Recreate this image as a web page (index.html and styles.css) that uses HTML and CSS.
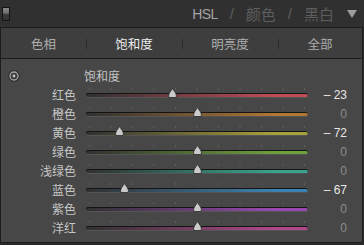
FILE: index.html
```html
<!DOCTYPE html>
<html lang="zh">
<head>
    <meta charset="UTF-8">
    <meta name="viewport" content="width=device-width, initial-scale=1.0">
    <title>HSL</title>
    <link rel="stylesheet" href="styles.css">
</head>
<body>
    <div class="header">
        <div class="switch"><span></span></div>
        <div class="title">
            <span class="title-item active">HSL</span>
            <span class="slash">/</span>
            <span class="title-item">颜色</span>
            <span class="slash">/</span>
            <span class="title-item">黑白</span>
            <svg class="arrow" width="10" height="8" viewBox="0 0 10 8"><polygon points="0,0 10,0 5,8" fill="#9c9c9c"/></svg>
        </div>
    </div>
    <div class="tabs">
        <div class="tab">色相</div>
        <div class="tab active">饱和度</div>
        <div class="tab">明亮度</div>
        <div class="tab">全部</div>
    </div>
    <div class="panel">
        <div class="panel-head">
            <div class="head-icon">
                <svg width="12" height="12" viewBox="0 0 12 12">
                    <circle cx="6" cy="6" r="5.2" fill="#3a3a3a" stroke="#2a2a2a" stroke-width="1"/>
                    <circle cx="6" cy="6" r="4" fill="none" stroke="#a4a4a4" stroke-width="1.3"/>
                    <circle cx="6" cy="6" r="1.4" fill="#c4c4c4"/>
                </svg>
            </div>
            <div class="head-title">饱和度</div>
        </div>
        <div id="slider-list"></div>
    </div>
    <script>
const sliders = [
  { name: '红色', value: -23, color: '#c04c56' },
  { name: '橙色', value: 0, color: '#b07634' },
  { name: '黄色', value: -72, color: '#a8a03c' },
  { name: '绿色', value: 0, color: '#6ea03c' },
  { name: '浅绿色', value: 0, color: '#38a48e' },
  { name: '蓝色', value: -67, color: '#3c82b0' },
  { name: '紫色', value: 0, color: '#9848b0' },
  { name: '洋红', value: 0, color: '#b0488a' }
];

const list = document.getElementById('slider-list');
sliders.forEach(s => {
  const row = document.createElement('div');
  row.className = 'slider-row';
  const left = 3.5 + (s.value + 100) / 200 * 215 - 4.5;
  const text = s.value === 0 ? '0' : '– ' + Math.abs(s.value);
  row.innerHTML = `
    <div class="slider-label">${s.name}</div>
    <div class="track" style="background: linear-gradient(to right, #303030, ${s.color} 85%);">
      <svg class="thumb" style="left: ${left}px" width="9" height="10" viewBox="0 0 9 10">
        <path d="M4.5 0.5 L7.6 5 Q8.8 7 8.2 9.5 L0.8 9.5 Q0.2 7 1.4 5 Z" fill="#cacaca" stroke="#2a2a2a" stroke-width="0.8"/>
      </svg>
    </div>
    <div class="slider-value ${s.value === 0 ? 'zero' : ''}">${text}</div>
  `;
  list.appendChild(row);
});
    </script>
</body>
</html>
```

FILE: styles.css
```css
body {
  margin: 0;
  background-color: #2b2b2b;
  font-family: "Liberation Sans", "Noto Sans CJK SC", sans-serif;
  width: 364px;
  height: 245px;
  overflow: hidden;
}

.header {
  height: 27px;
  display: flex;
  align-items: center;
  background-color: #303030;
}

.switch {
  width: 6px;
  height: 12px;
  margin-left: 2px;
  margin-top: 1px;
  border: 1px solid #151515;
  background: linear-gradient(#8a8a8a 0, #6a6a6a 45%, #3a3a3a 50%, #333 100%);
}

.title {
  margin-left: auto;
  margin-right: 7px;
  display: flex;
  align-items: center;
  gap: 11px;
  font-size: 15px;
  color: #5e5e5e;
}

.title-item.active {
  color: #a4a4a4;
  font-size: 14px;
  letter-spacing: -0.6px;
}

.slash {
  margin: 0 1px;
}

.arrow {
  margin-left: 2px;
}

.tabs {
  width: 361px;
  height: 30px;
  display: grid;
  grid-template-columns: 85px 96px 96px 1fr;
  border: 1px solid #1d1d1d;
  background-color: #3e3e3e;
}

.tab {
  position: relative;
  display: flex;
  align-items: center;
  justify-content: center;
  font-size: 12.5px;
  color: #adadad;
}

.tab.active {
  color: #ececec;
}

.tab + .tab::before {
  content: "";
  position: absolute;
  left: 0;
  top: 11px;
  height: 10px;
  width: 1px;
  background-color: #2a2a2a;
}

.panel {
  width: 361px;
  height: 176px;
  padding-top: 7px;
  border: 1px solid #1d1d1d;
  border-top: none;
  background-color: #474747;
}

.panel-head {
  display: flex;
  align-items: center;
  height: 19px;
}

.head-icon {
  width: 83px;
  padding-left: 7px;
  box-sizing: border-box;
  display: flex;
  align-items: center;
}

.head-title {
  font-size: 12px;
  color: #c2c2c2;
}

.slider-row {
  display: flex;
  align-items: center;
  height: 19px;
}

.slider-label {
  width: 75px;
  text-align: right;
  font-size: 12px;
  color: #c6c6c6;
}

.track {
  position: relative;
  width: 222px;
  height: 4px;
  margin-left: 10px;
  margin-top: 1px;
  border-radius: 2px;
  box-shadow: inset 0 1px 0 #141414, 0 1px 0 #555;
}

.track::before {
  content: "";
  position: absolute;
  left: 3px;
  top: -5px;
  width: 216px;
  height: 2px;
  background-image: linear-gradient(to right, #5e5e5e 0 1px, transparent 1px);
  background-size: 21.5px 2px;
  background-repeat: repeat-x;
}

.thumb {
  position: absolute;
  top: -5px;
}

.slider-value {
  width: 39px;
  text-align: right;
  font-size: 12px;
  color: #e8e8e8;
}

.slider-value.zero {
  color: #8c8c8c;
}
```
